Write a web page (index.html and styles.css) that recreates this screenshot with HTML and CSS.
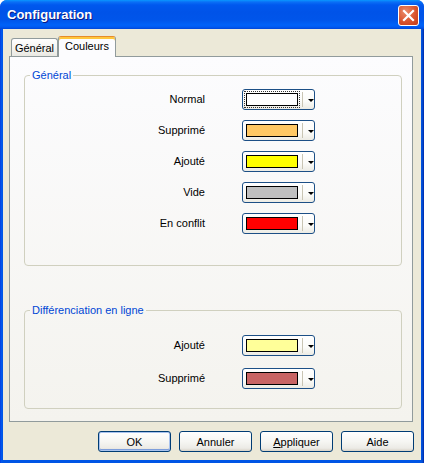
FILE: index.html
```html
<!DOCTYPE html>
<html lang="fr">
<head>
<meta charset="utf-8">
<title>Configuration</title>
<link rel="stylesheet" href="styles.css">
</head>
<body>
<div class="window">
  <div class="titlebar">
    <span class="title">Configuration</span>
    <div class="close">
      <svg width="13" height="13" viewBox="0 0 13 13"><path d="M2 2 L11 11 M11 2 L2 11" stroke="#fff" stroke-width="2.2" stroke-linecap="square"/></svg>
    </div>
  </div>
  <div class="client">
    <div class="tabs">
      <div class="tab">Général</div>
      <div class="tab active">Couleurs</div>
    </div>
    <div class="panel">
      <fieldset class="group g1">
        <legend>Général</legend>
        <div class="rows">
          <span class="label">Normal</span>
          <div class="combo"><span class="swatch focus" style="background:#ffffff"></span><span class="sep"></span><span class="arrow"></span></div>
          <span class="label">Supprimé</span>
          <div class="combo"><span class="swatch" style="background:#ffc864"></span><span class="sep"></span><span class="arrow"></span></div>
          <span class="label">Ajouté</span>
          <div class="combo"><span class="swatch" style="background:#ffff00"></span><span class="sep"></span><span class="arrow"></span></div>
          <span class="label">Vide</span>
          <div class="combo"><span class="swatch" style="background:#c0c0c0"></span><span class="sep"></span><span class="arrow"></span></div>
          <span class="label">En conflit</span>
          <div class="combo"><span class="swatch" style="background:#ff0000"></span><span class="sep"></span><span class="arrow"></span></div>
        </div>
      </fieldset>
      <fieldset class="group g2">
        <legend>Différenciation en ligne</legend>
        <div class="rows rows2">
          <span class="label">Ajouté</span>
          <div class="combo"><span class="swatch" style="background:#ffff99"></span><span class="sep"></span><span class="arrow"></span></div>
          <span class="label">Supprimé</span>
          <div class="combo"><span class="swatch" style="background:#c86464"></span><span class="sep"></span><span class="arrow"></span></div>
        </div>
      </fieldset>
    </div>
    <div class="buttons">
      <button class="btn default">OK</button>
      <button class="btn">Annuler</button>
      <button class="btn"><u>A</u>ppliquer</button>
      <button class="btn">Aide</button>
    </div>
  </div>
</div>
</body>
</html>
```

FILE: styles.css
```css
* { box-sizing: border-box; }
body {
  margin: 0;
  background: #ffffff;
  font-family: "Liberation Sans", Arial, sans-serif;
  font-size: 11px;
  color: #000;
}
.window {
  width: 424px;
  height: 463px;
  border-radius: 7px 7px 0 0;
  overflow: hidden;
  display: flex;
  flex-direction: column;
  background: linear-gradient(to right, #0831d9 0, #0058ee 1px, #0055e5 3px, #0055e5 421px, #0046c8 423px, #001ea0 424px);
}
.titlebar {
  height: 29px;
  flex: none;
  display: flex;
  align-items: center;
  justify-content: space-between;
  padding: 0 5px 0 7px;
  background: linear-gradient(#0997ff 0, #0a6ff6 2px, #0058ee 5px, #0053e8 12px, #0055ea 20px, #0062f8 25px, #005af2 27px, #0046d8 29px);
}
.title {
  color: #fff;
  font-weight: bold;
  font-size: 13px;
  text-shadow: 1px 1px 0 #0a1883;
  letter-spacing: 0;
  padding-bottom: 1px;
}
.close {
  width: 21px;
  height: 21px;
  border: 1px solid #fff;
  border-radius: 3px;
  background: radial-gradient(circle at 35% 30%, #eb8d6c 0, #d9542e 55%, #c23a17 100%);
  display: flex;
  align-items: center;
  justify-content: center;
  margin-top: 2px;
}
.client {
  flex: 1;
  margin: 0 3px 3px;
  background: #ece9d8;
  padding: 7px 7px 8px 6px;
  display: flex;
  flex-direction: column;
}
.tabs {
  height: 20px;
  display: flex;
  align-items: flex-end;
  padding-left: 2px;
}
.tab {
  height: 18px;
  width: 47px;
  border: 1px solid #919b9c;
  border-bottom: none;
  border-radius: 3px 3px 0 0;
  background: linear-gradient(#ffffff, #f3f3ef 60%, #e9e8e2);
  display: flex;
  align-items: center;
  justify-content: center;
  padding-top: 1px;
}
.tab.active {
  position: relative;
  z-index: 1;
  width: 58px;
  height: 21px;
  margin-bottom: -1px;
  margin-left: 0;
  border-top: 1px solid #e68b2c;
  box-shadow: inset 0 2px 0 #ffc73c;
  background: #fcfcfe;
  padding-top: 0;
  padding-bottom: 3px;
}
.panel {
  width: 404px;
  height: 366px;
  border: 1px solid #919b9c;
  background: linear-gradient(#fcfcfe, #f4f3ee);
  padding: 12px 0 0 14px;
}
.group {
  width: 378px;
  margin: 0;
  border: 1px solid #d0d0bf;
  border-radius: 4px;
  padding: 7px 0 31px 0;
  min-width: 0;
}
.group legend {
  color: #0046d5;
  line-height: 13px;
  padding: 0 2px;
  margin-left: 5px;
}
.g2 {
  margin-top: 38px;
  padding-top: 18px;
  padding-bottom: 19px;
}
.rows {
  display: grid;
  grid-template-columns: 180px 73px;
  column-gap: 37px;
  row-gap: 10px;
  align-items: center;
}
.rows2 { row-gap: 12px; }
.label {
  text-align: right;
  line-height: 13px;
}
.combo {
  height: 21px;
  border: 1px solid #1c4f86;
  border-radius: 3px;
  background: linear-gradient(#ffffff, #fbfbf8 60%, #ecebe4);
  display: flex;
  align-items: center;
  padding-left: 3px;
}
.swatch {
  width: 52px;
  height: 13px;
  border: 1px solid #000;
}
.swatch.focus {
  outline: 1px dotted #333;
  outline-offset: 1px;
}
.sep {
  width: 1px;
  height: 15px;
  background: #c9c5b4;
  margin-left: 4px;
}
.arrow {
  width: 0;
  height: 0;
  border-left: 3px solid transparent;
  border-right: 3px solid transparent;
  border-top: 3px solid #000;
  margin-left: 5px;
  margin-top: 1px;
}
.buttons {
  margin-top: 9px;
  display: flex;
  justify-content: flex-end;
  gap: 8px;
}
.btn {
  width: 73px;
  height: 21px;
  border: 1px solid #003c74;
  border-radius: 3px;
  background: linear-gradient(#ffffff, #f6f6f3 50%, #ecebe6 85%, #d8d2c6);
  font-family: "Liberation Sans", Arial, sans-serif;
  font-size: 11px;
  color: #000;
  padding: 0;
}
.btn.default {
  box-shadow: inset 0 0 0 1px #a9c3ee, inset 0 -1px 0 1px #7e9edb;
}
.btn u { text-decoration: underline; }
```
